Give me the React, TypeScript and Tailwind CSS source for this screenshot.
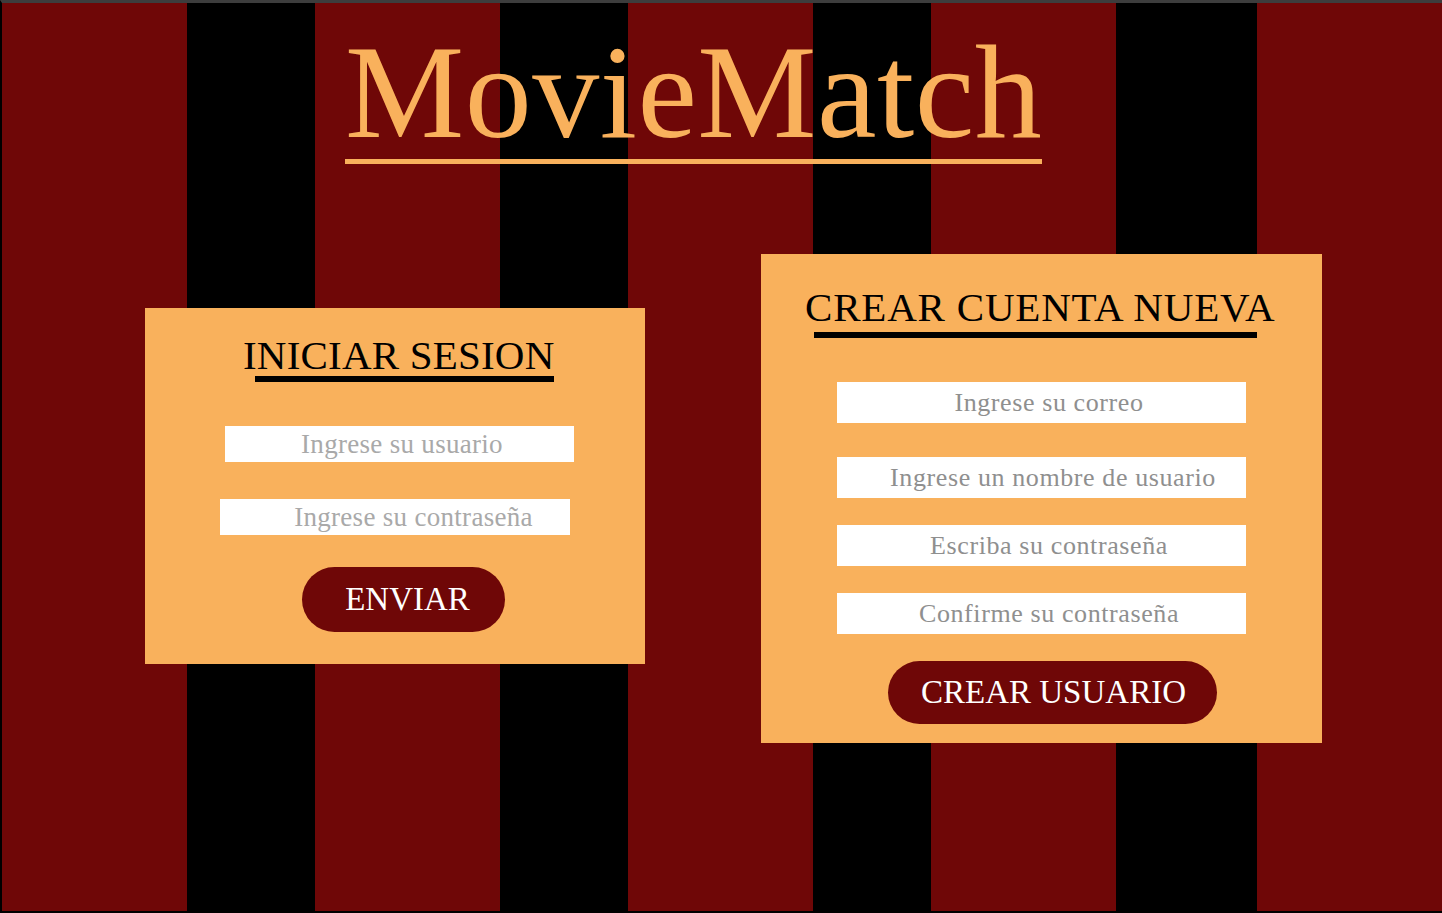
const serif = "font-['Liberation_Serif','Times_New_Roman',serif]";

function Field({
  placeholder,
  className,
}: {
  placeholder: string;
  className: string;
}) {
  return (
    <input
      type="text"
      placeholder={placeholder}
      className={`${serif} block bg-white text-center text-black outline-none ${className}`}
    />
  );
}

function LoginCard() {
  return (
    <div className="ml-[143px] mt-[144px] flex h-[356px] w-[500px] shrink-0 flex-col items-start bg-[#f9b15c] pt-[27px]">
      <div className="ml-[98px] flex flex-col items-end">
        <h2 className={`${serif} text-[41px] leading-none tracking-[0.2px] whitespace-nowrap text-black`}>
          INICIAR SESION
        </h2>
        <div className="h-[6px] w-[299px] bg-black" />
      </div>
      <Field
        placeholder="Ingrese su usuario"
        className="mt-[44px] ml-[80px] h-[36px] w-[349px] pl-[5px] text-[27px] tracking-[0.3px] placeholder:text-[#a9a9a9]"
      />
      <Field
        placeholder="Ingrese su contraseña"
        className="mt-[37px] ml-[75px] h-[36px] w-[350px] pl-[37px] text-[27px] tracking-[0.3px] placeholder:text-[#a9a9a9]"
      />
      <button
        className={`${serif} mt-[32px] ml-[157px] h-[65px] w-[203px] rounded-full bg-[#6f0707] pl-[8px] text-[33px] text-white`}
      >
        ENVIAR
      </button>
    </div>
  );
}

function SignupCard() {
  return (
    <div className="ml-[116px] mt-[90px] flex h-[489px] w-[561px] shrink-0 flex-col items-start bg-[#f9b15c] pt-[33px]">
      <div className="ml-[44px] flex flex-col items-start">
        <h2 className={`${serif} text-[41px] leading-none tracking-[0.8px] whitespace-nowrap text-black`}>
          CREAR CUENTA NUEVA
        </h2>
        <div className="mt-[4px] ml-[9px] h-[6px] w-[443px] bg-black" />
      </div>
      <Field
        placeholder="Ingrese su correo"
        className="mt-[44px] ml-[76px] h-[41px] w-[409px] pl-[15px] text-[26px] tracking-[0.6px] placeholder:text-[#8f8f8f]"
      />
      <Field
        placeholder="Ingrese un nombre de usuario"
        className="mt-[34px] ml-[76px] h-[41px] w-[409px] pl-[23px] text-[26px] tracking-[0.6px] placeholder:text-[#8f8f8f]"
      />
      <Field
        placeholder="Escriba su contraseña"
        className="mt-[27px] ml-[76px] h-[41px] w-[409px] pl-[15px] text-[26px] tracking-[0.6px] placeholder:text-[#8f8f8f]"
      />
      <Field
        placeholder="Confirme su contraseña"
        className="mt-[27px] ml-[76px] h-[41px] w-[409px] pl-[15px] text-[26px] tracking-[0.6px] placeholder:text-[#8f8f8f]"
      />
      <button
        className={`${serif} mt-[27px] ml-[127px] h-[63px] w-[329px] rounded-full bg-[#6f0707] pl-[2px] text-[33px] text-white`}
      >
        CREAR USUARIO
      </button>
    </div>
  );
}

export default function App() {
  return (
    <div className="flex h-[913px] w-[1442px] flex-col overflow-hidden border-t-[3px] border-l-2 border-b-2 border-t-[#3d3d3d] border-l-black border-b-black bg-origin-border bg-[linear-gradient(to_right,#6f0707_0_187px,#000_187px_315px,#6f0707_315px_500px,#000_500px_628px,#6f0707_628px_813px,#000_813px_931px,#6f0707_931px_1116px,#000_1116px_1257px,#6f0707_1257px)]">
      <div className="mt-[22px] ml-[343px] self-start">
        <h1
          className={`${serif} inline-block border-b-[5px] border-[#f9b15c] text-[134px] leading-none tracking-[0.5px] whitespace-nowrap text-[#f9b15c]`}
        >
          MovieMatch
        </h1>
      </div>
      <div className="flex items-start">
        <LoginCard />
        <SignupCard />
      </div>
    </div>
  );
}
